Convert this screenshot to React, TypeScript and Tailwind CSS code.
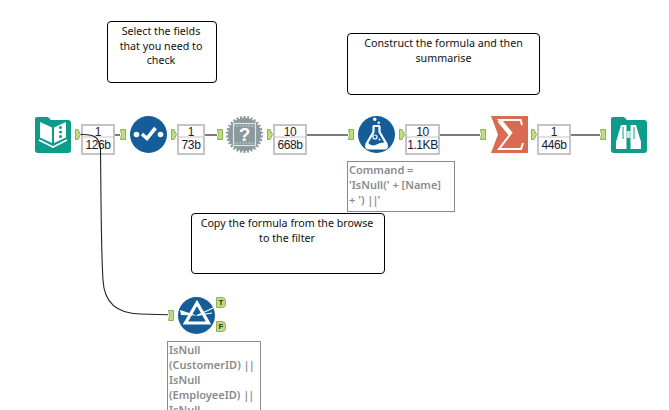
import React from 'react';

const noteFont = "font-['Noto_Sans',sans-serif]";

// Yellow-green connection anchors
const OutAnchor = ({ className = '' }: { className?: string }) => (
  <svg className={`shrink-0 mt-[13px] ${className}`} width="6" height="11" viewBox="0 0 6 11">
    <path d="M0.5 0.5H3L5.5 5.5L3 10.5H0.5Z" fill="#bfdc80" stroke="#8fae5a" />
  </svg>
);

const InAnchor = ({ className = '' }: { className?: string }) => (
  <svg className={`shrink-0 mt-[13px] ${className}`} width="6" height="11" viewBox="0 0 6 11">
    <path d="M0.5 0.5H5.5V10.5H0.5L1.5 5.5Z" fill="#bfdc80" stroke="#8fae5a" />
  </svg>
);

const Wire = ({ className }: { className: string }) => (
  <div className={`shrink-0 h-[2px] mt-[18px] bg-[#7b7b7b] ${className}`} />
);

const Metric = ({ top, bottom, className }: { top: string; bottom: string; className: string }) => (
  <div className={`shrink-0 h-[31px] mt-[8px] border-2 border-[#c4c4c4] bg-white flex flex-col items-center font-['Liberation_Sans',sans-serif] text-[12px] tracking-[-0.4px] leading-[13px] ${className}`}>
    <span className="h-[10px] text-[#2b1d1d]">{top}</span>
    <span className="w-full border-t-2 border-[#e2e2e2] pt-[1px] text-center text-[#12202f]">{bottom}</span>
  </div>
);

const Note = ({ text, className }: { text: React.ReactNode; className: string }) => (
  <div className={`absolute border border-black rounded-[4px] bg-white text-center text-[10.7px] leading-[14.5px] text-[#111] ${noteFont} ${className}`}>
    {text}
  </div>
);

const Bars = () => <span className="tracking-[-1px]">||</span>;

const annotationClass = `border border-[#8a8a8a] bg-white px-[1px] text-[11px] leading-[15px] font-semibold text-[#8b8b8b] whitespace-nowrap ${noteFont}`;

const BookIcon = () => (
  <svg className="shrink-0 mt-[1px]" width="36" height="36" viewBox="0 0 36 36">
    <path d="M2 0H13L16 3H33Q36 3 36 6V33Q36 36 33 36H3Q0 36 0 33V2Q0 0 2 0Z" fill="#0d9c8a" />
    <path d="M5 5L17 10.5V26L5 20.5Z" fill="#fff" />
    <path d="M19 10.5L31 5V20.5L19 26Z" fill="#fff" />
    <path d="M4 23L18 30L32 23" fill="none" stroke="#fff" strokeWidth="1.6" />
    <circle cx="25.5" cy="10.5" r="1.5" fill="#0d9c8a" />
    <circle cx="25.5" cy="15" r="1.5" fill="#0d9c8a" />
    <circle cx="25.5" cy="19.5" r="1.5" fill="#0d9c8a" />
  </svg>
);

const SelectIcon = () => (
  <svg className="shrink-0" width="37" height="37" viewBox="0 0 37 37">
    <circle cx="18.5" cy="18.5" r="18.5" fill="#155d99" />
    <circle cx="6.5" cy="18.5" r="2.8" fill="#fff" />
    <circle cx="30.5" cy="18.5" r="2.8" fill="#fff" />
    <path d="M12 18L17 22.5L25.5 12" fill="none" stroke="#fff" strokeWidth="3.6" />
  </svg>
);

const teeth = Array.from({ length: 30 }, (_, i) => i * 12);

const DynamicIcon = () => (
  <svg className="shrink-0" width="37" height="37" viewBox="0 0 37 37">
    {teeth.map((deg) => (
      <rect key={deg} x="17.5" y="0" width="2" height="4" fill="#8a999c" transform={`rotate(${deg} 18.5 18.5)`} />
    ))}
    <circle cx="18.5" cy="18.5" r="16.5" fill="#8a999c" />
    <rect x="7.5" y="7.5" width="22" height="22" fill="none" stroke="#dfe4e4" strokeWidth="1.2" />
    <path d="M7.5 10H29.5M7.5 27H29.5" stroke="#dfe4e4" strokeWidth="1" strokeDasharray="1.5 1.5" />
    <text x="18.5" y="25" textAnchor="middle" fontFamily="Liberation Sans, sans-serif" fontWeight="700" fontSize="19" fill="#fff">?</text>
  </svg>
);

const FormulaIcon = () => (
  <svg className="shrink-0" width="37" height="37" viewBox="0 0 37 37">
    <circle cx="18.5" cy="18.5" r="18.5" fill="#155d99" />
    <circle cx="16.7" cy="3.2" r="1.7" fill="#fff" />
    <circle cx="20.7" cy="6.7" r="1.2" fill="#fff" />
    <path d="M15 10H22M15.5 10V16L8.5 28Q7 32.5 11 32.5H26Q30 32.5 28.5 28L21.5 16V10" fill="none" stroke="#fff" strokeWidth="2.2" />
    <path d="M10 27Q14 31 18.5 28.5T27 26.5L28.5 30Q28 33 25 33H12Q8 33 8.5 30Z" fill="#fff" />
    <circle cx="17" cy="21" r="2" fill="none" stroke="#fff" strokeWidth="1.2" />
    <circle cx="21.5" cy="23.5" r="1" fill="#fff" />
  </svg>
);

const SumIcon = () => (
  <svg className="shrink-0" width="37" height="37" viewBox="0 0 37 37">
    <path d="M0 0H37V37H0L7 18.5Z" fill="#d96b52" />
    <path d="M31 9L29.5 4H8L19 18.5L8 33H30L32 27" fill="none" stroke="#fff" strokeWidth="2" />
    <path d="M8.5 4.5L20 18.5" stroke="#fff" strokeWidth="4.5" />
  </svg>
);

const BrowseIcon = () => (
  <svg className="shrink-0 mt-[1px]" width="36" height="36" viewBox="0 0 36 36">
    <path d="M2 0H13L16 3H33Q36 3 36 6V33Q36 36 33 36H3Q0 36 0 33V2Q0 0 2 0Z" fill="#0d9c8a" />
    <path d="M10 8H15.5V32H5V25Z" fill="#fff" />
    <path d="M25 8H19.5V32H30V25Z" fill="#fff" />
    <path d="M12 10V22M23 10V22" stroke="#0d9c8a" strokeWidth="1" />
    <path d="M15.5 14H19.5V21H15.5Z" fill="#c9e6e2" />
  </svg>
);

const FilterIcon = () => (
  <svg className="shrink-0" width="37" height="37" viewBox="0 0 37 37">
    <circle cx="18.5" cy="18.5" r="18.5" fill="#155d99" />
    <path d="M19 6L30.5 26H7.5Z" fill="none" stroke="#fff" strokeWidth="3.2" />
    <path d="M2 13L19 18.5L3 18Z" fill="#fff" />
    <path d="M19 18.5L35 11M19 18.5L34 16" stroke="#fff" strokeWidth="1.2" />
  </svg>
);

const FilterAnchor = ({ label }: { label: string }) => (
  <div className="w-[10px] h-[11px] flex items-center justify-center bg-[#bfdc80] border border-[#8fae5a] rounded-r-[4px] font-['Liberation_Sans',sans-serif] text-[8px] font-bold leading-none text-[#2c3a18]">
    {label}
  </div>
);

export default function App() {
  return (
    <div className="relative w-[669px] h-[410px] overflow-hidden bg-white">
      <Note text="Select the fields that you need to check" className="left-[107px] top-[21px] w-[110px] h-[62px] pl-[11px] pr-[13px] pt-[2px]" />
      <Note text="Construct the formula and then summarise" className="left-[347px] top-[33px] w-[193px] h-[62px] px-3 pt-[2px]" />
      <Note text="Copy the formula from the browse to the filter" className="left-[191px] top-[213px] w-[194px] h-[61px] pl-[7px] pr-[9px] pt-[2px]" />

      {/* Main workflow */}
      <div className="absolute left-[35px] top-[116px] flex items-start">
        <BookIcon />
        <OutAnchor className="ml-[4px]" />
        <Metric top="1" bottom="126b" className="w-[34px]" />
        <Wire className="w-[5px]" />
        <InAnchor />
        <div className="w-[4px] shrink-0" />
        <SelectIcon />
        <OutAnchor className="ml-[4px]" />
        <Metric top="1" bottom="73b" className="w-[28px]" />
        <Wire className="w-[12px]" />
        <InAnchor />
        <div className="w-[3px] shrink-0" />
        <DynamicIcon />
        <OutAnchor className="ml-[4px]" />
        <Metric top="10" bottom="668b" className="w-[34px]" />
        <Wire className="w-[41px]" />
        <InAnchor />
        <div className="w-[4px] shrink-0" />
        <FormulaIcon />
        <OutAnchor className="ml-[4px]" />
        <Metric top="10" bottom="1.1KB" className="w-[35px]" />
        <Wire className="w-[40px]" />
        <InAnchor />
        <div className="w-[5px] shrink-0" />
        <SumIcon />
        <OutAnchor className="ml-[3px]" />
        <Metric top="1" bottom="446b" className="w-[34px]" />
        <Wire className="w-[29px]" />
        <InAnchor />
        <div className="w-[5px] shrink-0" />
        <BrowseIcon />
      </div>

      <div className={`absolute left-[347px] top-[161px] w-[108px] h-[51px] ${annotationClass}`}>
        <div>Command =</div>
        <div>'IsNull(' + [Name]</div>
        <div>+ ') <Bars />'</div>
      </div>

      {/* Filter branch */}
      <div className="absolute left-[167px] top-[297px] w-[94px] h-[130px] flex flex-col">
        <div className="flex items-start">
          <InAnchor className="ml-[1px] mt-[12px]" />
          <div className="w-[4px] shrink-0" />
          <FilterIcon />
          <div className="ml-[1px] flex flex-col gap-[13px]">
            <FilterAnchor label="T" />
            <FilterAnchor label="F" />
          </div>
        </div>
        <div className={`mt-[7px] flex-1 ${annotationClass}`}>
          <div>IsNull</div>
          <div>(CustomerID) <Bars /></div>
          <div>IsNull</div>
          <div>(EmployeeID) <Bars /></div>
          <div>IsNull</div>
        </div>
      </div>

      {/* Black wire sits on top of the first metric box */}
      <svg className="absolute left-0 top-0 pointer-events-none" width="669" height="410" viewBox="0 0 669 410">
        <path d="M81 134.5C94 134 100 137 100.5 150C101 190 101 250 103 280C104 300 115 313.5 140 314L168 314.7" fill="none" stroke="#222" strokeWidth="1.1" />
      </svg>
    </div>
  );
}
